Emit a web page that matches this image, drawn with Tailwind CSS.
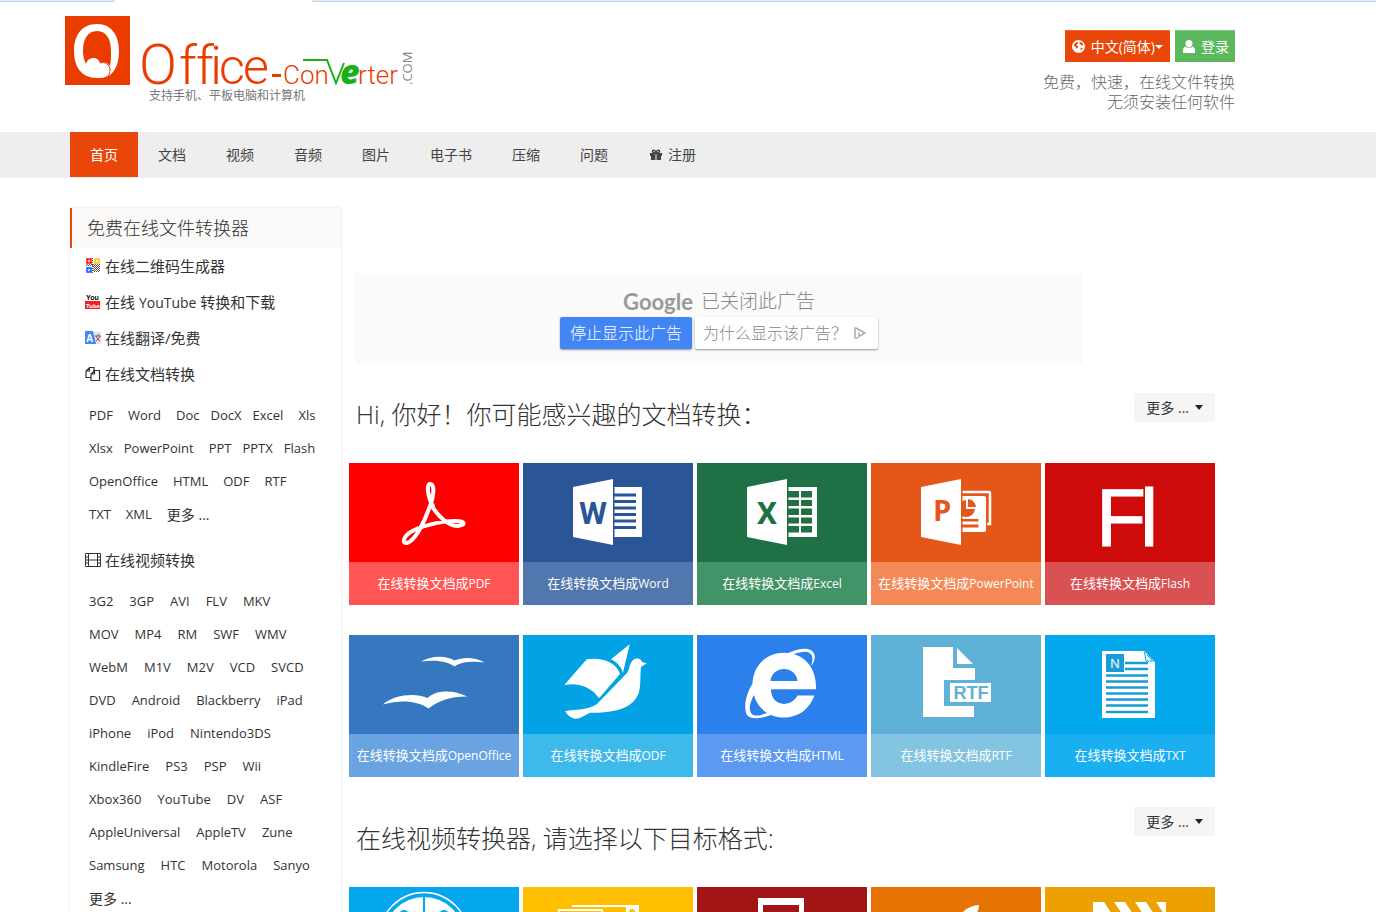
<!DOCTYPE html>
<html lang="zh-CN">
<head>
<meta charset="utf-8">
<title>Office-Converter</title>
<script src="https://cdn.jsdelivr.net/npm/@tailwindcss/browser@4"></script>
</head>
<body class="h-screen overflow-hidden bg-white font-['Open_Sans','Noto_Sans_CJK_SC',sans-serif] text-[#333]">

<div class="flex h-[2px]">
  <div class="w-[115px] rounded-br border-b border-[#b9cfe6] bg-[#e3edf7]"></div>
  <div class="ml-[197px] flex-1 rounded-bl border-b border-[#b9cfe6] bg-[#e3edf7]"></div>
</div>

<header class="h-[130px] pl-[65px]">
  <div class="flex max-w-[1170px] justify-between">
    <a href="#" class="block pt-[14px]" aria-label="Office-Converter.com">
      <svg class="overflow-visible" width="350" height="70" viewBox="0 0 350 70">
        <rect width="65" height="69" fill="#eb3c00"/>
        <path fill="#fff" fill-rule="evenodd" d="M32 8C47 8 54 20 54 35C54 46 51 54 45 59C41 62 37 62 32 62C16 62 9 50 9 35C9 19 17 8 32 8ZM32 15C22 15 18 24 18 35C18 40 19 44 21 48C22 44 25 42 29 42C32 42 34 44 35 47C39 45 43 47 45 50C46 46 46 41 46 35C46 24 42 15 32 15Z"/>
        <path fill="none" stroke="#eb3c00" stroke-width="1" d="M35 47C40 45 45 49 45 54C45 58 43 61 39 62"/>
        <g fill="#eb3c00" font-family="Roboto" font-weight="300">
          <text x="74" y="68" font-size="56">O</text>
          <text x="114 131 145" y="68" font-size="54">ffi</text>
          <text x="154 178" y="68" font-size="50">ce</text>
          <rect x="207" y="58" width="9" height="3"/>
          <text x="218" y="68" font-size="26">Con</text>
          <text x="293" y="68" font-size="26">rter</text>
        </g>
        <path fill="none" stroke="#18b218" stroke-width="2" d="M238 44H262L271 67L279 47"/>
        <text x="275" y="68" font-size="34" fill="#18b218" font-family="Open Sans" font-weight="800" font-style="italic">e</text>
        <text transform="translate(347 69) rotate(-90)" font-size="13" fill="#888" font-family="Open Sans">.COM</text>
      </svg>
      <span class="block pl-[84px] text-xs leading-5 text-[#777]">支持手机、平板电脑和计算机</span>
    </a>
    <div class="flex flex-col items-end pt-7">
      <div class="flex gap-[5px] text-sm text-white [text-shadow:1px_1px_1px_rgba(0,0,0,0.4)]">
        <button class="flex h-8 items-center border-t border-[#ec6a35] bg-[#e84709] px-[7px] whitespace-nowrap">
          <svg class="mr-[6px]" width="13" height="13" viewBox="0 0 12 12"><circle cx="6" cy="6" r="6" fill="#fff"/><path fill="#e84709" d="M2.500 3L5 1.500L5.500 3L4 4.500L6 6L4.500 8L3 6L1.500 5ZM7 1.500L9.500 2.500L10.500 5L8.500 4.500L7 3.500ZM8 7L10 7.500L8 10Z"/></svg>
          中文(简体)
          <svg width="8" height="4" viewBox="0 0 8 4"><path fill="#fff" d="M0 0H8L4 4Z"/></svg>
        </button>
        <button class="flex h-8 items-center border-t border-[#79c579] bg-[#5cb85c] pr-[6px] pl-2 whitespace-nowrap">
          <svg class="mr-[6px]" width="12" height="13" viewBox="0 0 12 13"><path fill="#fff" d="M6 0C8 0 9.500 1.500 9.500 3.500S8 7.500 6 7.500S2.500 5.500 2.500 3.500S4 0 6 0ZM0 13V10C0 8 1 7 2.500 6.500C4 8.500 8 8.500 9.500 6.500C11 7 12 8 12 10V13Z"/></svg>
          登录
        </button>
      </div>
      <p class="mt-[10px] text-right text-base leading-5 font-light text-[#666]">免费，快速，在线文件转换<br>无须安装任何软件</p>
    </div>
  </div>
</header>

<nav class="h-[46px] bg-[#eee] pl-[70px]">
  <div class="flex text-sm leading-[45px] text-[#444] [&>a]:px-5">
    <a href="#" class="bg-[#e84709] text-white">首页</a>
    <a href="#">文档</a>
    <a href="#">视频</a>
    <a href="#">音频</a>
    <a href="#">图片</a>
    <a href="#">电子书</a>
    <a href="#">压缩</a>
    <a href="#">问题</a>
    <a href="#" class="flex items-center gap-[6px]"><svg class="ml-[2px]" width="12" height="12" viewBox="0 0 12 12" fill="#444"><path d="M0 4H5V7H0ZM7 4H12V7H7ZM1 7H5V11H1ZM7 7H11V11H7Z"/><path d="M5 4H7V11H5Z" fill="#999"/><path fill="none" stroke="#444" stroke-width="1.400" d="M6 4C4 4 2.500 3.500 2.500 2.200C2.500 0.500 5 0.500 6 4C7 0.500 9.500 0.500 9.500 2.200C9.500 3.500 8 4 6 4Z"/></svg>注册</a>
  </div>
</nav>

<div class="flex max-w-[1235px] items-start pt-[30px] pr-5 pl-[70px]">
  <aside class="w-[271px] shrink-0 pb-4 shadow-[0_0_3px_rgba(0,0,0,0.12)]">
    <h2 class="h-10 border-l-2 border-[#e84709] bg-[#faf9f8] pl-[15px] text-lg leading-10 font-light">免费在线文件转换器</h2>
    <div class="text-[15px] [&>a]:flex [&>a]:h-9 [&>a]:items-center [&>a]:gap-1 [&>a]:pl-[15px] [&_svg]:shrink-0">
      <a href="#"><svg width="16" height="16" viewBox="0 0 16 16" fill="none"><path stroke="#f00" stroke-width="1.500" d="M2 1H6V5H2Z"/><path fill="#f00" d="M3.500 2.500H4.500V3.500H3.500Z"/><path stroke="#fb0" stroke-width="1.500" d="M10 1H14V5H10Z"/><path fill="#fb0" d="M11.500 2.500H12.500V3.500H11.500Z"/><path stroke="#05f" stroke-width="1.500" d="M2 10H6V14H2Z"/><path fill="#05f" d="M3.500 11.500H4.500V12.500H3.500Z"/><path stroke="#555" stroke-width="1" stroke-dasharray="1 1" d="M7.500 0V15M1 7.500H15M2 6.500H15M8 8.500H15M9 9.500H15M8 10.500H15M9 11.500H15M8 12.500H15M9 13.500H15"/></svg>在线二维码生成器</a>
      <a href="#"><svg width="16" height="16" viewBox="0 0 16 16"><rect y="7" width="15" height="8" fill="#e22"/><text x="1" y="6" font-size="7" font-weight="700" font-family="Liberation Sans" fill="#000">You</text><text x="1" y="14" font-size="6" font-weight="700" font-family="Liberation Sans" fill="#fff">Tube</text></svg><span>在线 <span class="text-sm">YouTube</span> 转换和下载</span></a>
      <a href="#"><svg width="16" height="14" viewBox="0 0 16 14"><rect x="8" y="1" width="8" height="12" fill="#e4e4e4"/><path fill="#4587f4" d="M0 0H8L11 13H0Z"/><text x="1" y="11" font-size="10" font-weight="700" font-family="Liberation Sans" fill="#fff">A</text><path fill="none" stroke="#855" stroke-width="1" d="M10 5H16M13 3V5M15 5C14 8 12 9 11 10M11 5C12 8 14 9 15 10"/></svg>在线翻译/免费</a>
      <a href="#"><svg width="16" height="16" viewBox="0 0 16 16" fill="none" stroke="#333" stroke-width="1.200"><path d="M6 11.500H1V5L4.500 1.500H9V5M1 5H4.500V1.500"/><path d="M6 14.500V8L9.500 4.500H14.500V14.500ZM6 8H9.500V4.500"/></svg>在线文档转换</a>
    </div>
    <div class="pt-[7px] pb-[11px] pl-[19px] text-[13px] leading-[33px] [&_a]:mr-[15px] [&>div]:flex">
      <div><a href="#">PDF</a><a href="#">Word</a><a href="#" class="mr-[11px]!">Doc</a><a href="#" class="mr-[11px]!">DocX</a><a href="#">Excel</a><a href="#">Xls</a></div>
      <div><a href="#" class="mr-[11px]!">Xlsx</a><a href="#">PowerPoint</a><a href="#" class="mr-[11px]!">PPT</a><a href="#" class="mr-[11px]!">PPTX</a><a href="#">Flash</a></div>
      <div><a href="#">OpenOffice</a><a href="#">HTML</a><a href="#">ODF</a><a href="#">RTF</a></div>
      <div><a href="#">TXT</a><a href="#">XML</a><a href="#" class="text-[14px]">更多 ...</a></div>
    </div>
    <a href="#" class="flex h-9 items-center gap-1 pl-[15px] text-[15px]"><svg width="16" height="14" viewBox="0 0 16 14" fill="none" stroke="#333"><path d="M0.500 0.500H15.500V13.500H0.500ZM3.500 0.500V13.500M12.500 0.500V13.500M3.500 7H12.500"/><path d="M0 4H3M0 7H3M0 10H3M13 4H16M13 7H16M13 10H16"/></svg>在线视频转换</a>
    <div class="pt-[7px] pl-[19px] text-[13px] leading-[33px] [&_a]:mr-4 [&>div]:flex">
      <div><a href="#">3G2</a><a href="#">3GP</a><a href="#">AVI</a><a href="#">FLV</a><a href="#">MKV</a></div>
      <div><a href="#">MOV</a><a href="#">MP4</a><a href="#">RM</a><a href="#">SWF</a><a href="#">WMV</a></div>
      <div><a href="#">WebM</a><a href="#">M1V</a><a href="#">M2V</a><a href="#">VCD</a><a href="#">SVCD</a></div>
      <div><a href="#">DVD</a><a href="#">Android</a><a href="#">Blackberry</a><a href="#">iPad</a></div>
      <div><a href="#">iPhone</a><a href="#">iPod</a><a href="#">Nintendo3DS</a></div>
      <div><a href="#">KindleFire</a><a href="#">PS3</a><a href="#">PSP</a><a href="#">Wii</a></div>
      <div><a href="#">Xbox360</a><a href="#">YouTube</a><a href="#">DV</a><a href="#">ASF</a></div>
      <div><a href="#">AppleUniversal</a><a href="#">AppleTV</a><a href="#">Zune</a></div>
      <div><a href="#">Samsung</a><a href="#">HTC</a><a href="#">Motorola</a><a href="#">Sanyo</a></div>
      <div><a href="#" class="text-[14px]">更多 ...</a></div>
    </div>
  </aside>

  <main class="ml-2 min-w-0 flex-1 pt-[65px]">
    <div class="ml-[6px] flex h-[90px] max-w-[728px] flex-col items-center bg-[#fafafa] pt-3">
      <div class="flex h-8 items-center gap-2 text-[19px] font-light text-[#888]">
        <span class="font-['Lato'] text-[22px] font-bold text-[#999]">Google</span><span>已关闭此广告</span>
      </div>
      <div class="flex gap-[3px] text-base font-light">
        <button class="h-8 rounded-xs bg-[#4285f4] px-[10px] text-white shadow-[0_1px_2px_rgba(0,0,0,0.4)]">停止显示此广告</button>
        <button class="flex h-8 items-center rounded-xs bg-white pr-3 pl-2 text-[#888] shadow-[0_1px_2px_rgba(0,0,0,0.4)]">为什么显示该广告？<svg class="ml-[7px]" width="12" height="12" viewBox="0 0 12 12" fill="none" stroke="#aaa" stroke-width="1.500"><path d="M4 11H1V1H2L11 6L5 9.500V5.500M5 3V4"/></svg></button>
      </div>
    </div>

    <section class="mt-[30px]">
      <div class="flex h-[70px] items-start justify-between pl-[7px]">
        <h2 class="text-[25px] leading-[42px] font-light">Hi, 你好！你可能感兴趣的文档转换：</h2>
        <button class="flex h-[29px] items-center bg-[#f5f5f5] px-3 text-sm">更多 ...<svg class="ml-[6px]" width="8" height="5" viewBox="0 0 8 5"><path fill="#222" d="M0 0H8L4 5Z"/></svg></button>
      </div>
      <div class="grid grid-cols-5 gap-x-1 gap-y-[30px] text-center text-[13px] leading-[43px] whitespace-nowrap text-white [&_b]:text-xs [&_b]:font-medium [&_svg]:mx-auto [&_svg]:block">
        <a href="#" class="bg-[#f00]"><svg width="170" height="99" viewBox="0 0 170 99" fill="none" stroke="#fff" stroke-width="4" stroke-linecap="round" stroke-linejoin="round"><path d="M84 43C79 35 77 21 81 21C86 21 85 33 81 43C76 57 67 77 58 80C53 81 54 75 60 70C71 63 92 58 106 58C117 58 117 62 109 63C97 63 88 51 82 42"/></svg><span class="block bg-[#ff5555]">在线转换文档成<b>PDF</b></span></a>
        <a href="#" class="bg-[#2a5697]"><svg width="170" height="99" viewBox="0 0 170 99"><path fill="#fff" d="M50 24L90 16V82L50 74ZM91.500 24H119V74H91.500Z"/><path stroke="#2a5697" stroke-width="3" d="M91 32H113M91 38.500H113M91 45H113M91 51.500H113M91 58H113M91 64.500H113"/><text x="70" y="61" text-anchor="middle" font-size="32" font-weight="700" font-family="Roboto" fill="#2a5697">W</text></svg><span class="block bg-[#5276ae]">在线转换文档成<b>Word</b></span></a>
        <a href="#" class="bg-[#1f7145]"><svg width="170" height="99" viewBox="0 0 170 99"><path fill="#fff" d="M50 24L90 16V82L50 74ZM91.500 24H120V74H91.500Z"/><path fill="#1f7145" d="M91 28H102V34.500H91ZM104 28H115V34.500H104ZM91 37H102V43H91ZM104 37H115V43H104ZM91 45.500H102V52H91ZM104 45.500H115V52H104ZM91 54.500H102V60.500H91ZM104 54.500H115V60.500H104ZM91 63H102V69.500H91ZM104 63H115V69.500H104Z"/><text x="70" y="61" text-anchor="middle" font-size="32" font-weight="700" font-family="Roboto" fill="#1f7145">X</text></svg><span class="block bg-[#429368]">在线转换文档成<b>Excel</b></span></a>
        <a href="#" class="bg-[#e55619]"><svg width="170" height="99" viewBox="0 0 170 99"><path fill="#fff" d="M50 24L90 16V82L50 74ZM91.500 33H113Q115 33 115 35V67Q115 69 113 69H91.500Z"/><path fill="none" stroke="#fff" stroke-width="2.500" d="M91.500 29H118Q119 29 119 31V61H116"/><path fill="#e55619" d="M95 37V46H104A9 9 0 0 1 91 53V38ZM97 36A9 9 0 0 1 105 44H97ZM91 56H107.500V58.500H91ZM91 61.500H107.500V64.500H91Z"/><text x="71" y="58" text-anchor="middle" font-size="29" font-weight="700" font-family="Open Sans" fill="#e55619">P</text></svg><span class="block bg-[#f38957]">在线转换文档成<b>PowerPoint</b></span></a>
        <a href="#" class="bg-[#ce0a0b]"><svg width="170" height="99" viewBox="0 0 170 99"><text x="51 95" y="83" font-size="82" font-family="Liberation Sans" fill="#fff" stroke="#fff">Fl</text></svg><span class="block bg-[#d95152]">在线转换文档成<b>Flash</b></span></a>

        <a href="#" class="bg-[#3578c0]"><svg width="170" height="99" viewBox="0 0 170 99" fill="#fff"><path d="M72 26.500C82 21 96 20 105.500 25.500C114 22 126 22 135.500 27.500C123 26 112 27 105.500 31.500C97 26 86 25 72 26.500ZM34 69.500C46 59 67 58 78.500 63C88 54 105 55 118.500 61.500C104 61 90 65 79.500 73.500C67 65 51 65 34 69.500Z"/></svg><span class="block bg-[#69a3e1]">在线转换文档成<b>OpenOffice</b></span></a>
        <a href="#" class="bg-[#02a3e4]"><svg width="170" height="99" viewBox="0 0 170 99" fill="#fff"><path d="M106.700 9.300L88 24.300Q97 28 100 37.700ZM63.700 24.300C77 22 93 26 97 39L76 63.300C69 52 55 47 41.300 50ZM123.700 28.300L118 32C117 40 118 50 116 57C111 72 96 78 67 77.700C62 80 57 84 52 83.700C48 83 44 80 42 76.300C50 74 64 76 74 69L104 38C107 34 106 29 110 25C114 22 118 24 119 27Z"/></svg><span class="block bg-[#3db9ea]">在线转换文档成<b>ODF</b></span></a>
        <a href="#" class="bg-[#2c80ec]"><svg width="170" height="99" viewBox="0 0 170 99" fill="#fff"><path fill-rule="evenodd" d="M119 54.300H74C74 72 94 73 100.500 60.500H117.500C112 75 101 82.500 87 82.500C68 82.500 55.500 68 55.500 50C55.500 31 69 17.700 87 17.700C108 17.700 120 34 119 54.300ZM73.500 46H100.500C99 30 75 30 73.500 46Z"/><path d="M91 18C103 13 112 12 116 17C119 21 118 26 114 31C117 22 115 18 110 17C104 16 98 19 94 20ZM56 48C49 58 46 73 50 80C54 85 65 84 76 79L74 76C66 80 57 83 54 78C51 73 54 65 58 58Z"/></svg><span class="block bg-[#5b9af0]">在线转换文档成<b>HTML</b></span></a>
        <a href="#" class="bg-[#5fb1d8]"><svg width="170" height="99" viewBox="0 0 170 99"><path fill="#fff" d="M52 12H82V33H104V45H73V71H103V82H52ZM86 13L102 29H86ZM79 48H120V67H79Z"/><text x="100" y="64" text-anchor="middle" font-size="18" font-weight="700" font-family="Liberation Sans" fill="#5fb1d8">RTF</text></svg><span class="block bg-[#83c4e2]">在线转换文档成<b>RTF</b></span></a>
        <a href="#" class="bg-[#03a7ec]"><svg width="170" height="99" viewBox="0 0 170 99"><path fill="#fff" d="M57 16H99L110 27V83H57Z"/><path fill="none" stroke="#03a7ec" stroke-width="1" d="M99.500 17L101 26H109M102 20L107 25"/><path fill="#1a9bd7" d="M61 19H79V37H61Z"/><path stroke="#1a9bd7" stroke-width="2.500" d="M80 28H103M80 34H103M61 40.500H103M61 46.500H103M61 52.500H103M61 58.500H103M61 64.500H103M61 70.500H103M61 77H103"/><text x="70" y="33" text-anchor="middle" font-size="13" font-family="Liberation Sans" fill="#fff">N</text></svg><span class="block bg-[#1aaff0]">在线转换文档成<b>TXT</b></span></a>
      </div>
    </section>

    <section class="mt-[30px]">
      <div class="flex h-20 items-start justify-between pl-[7px]">
        <h2 class="text-[25px] leading-[62px] font-light">在线视频转换器, 请选择以下目标格式:</h2>
        <button class="flex h-[29px] items-center bg-[#f5f5f5] px-3 text-sm">更多 ...<svg class="ml-[6px]" width="8" height="5" viewBox="0 0 8 5"><path fill="#222" d="M0 0H8L4 5Z"/></svg></button>
      </div>
      <div class="grid grid-cols-5 gap-x-1 [&_svg]:mx-auto [&_svg]:block">
        <a href="#" class="bg-[#03a7ec]"><svg width="170" height="142" viewBox="0 0 170 142"><circle cx="75" cy="50" r="44.500" fill="none" stroke="#fff" stroke-width="1.500"/><circle cx="75" cy="50" r="40" fill="#fff"/><path stroke="#03a7ec" stroke-width="2" d="M75 8V60"/><circle cx="55" cy="28" r="5" fill="#03a7ec"/><circle cx="95" cy="28" r="5" fill="#03a7ec"/></svg></a>
        <a href="#" class="bg-[#ffbf00]"><svg width="170" height="142" viewBox="0 0 170 142"><path fill="#fff" d="M49 18H116V60H103V20H49Z"/><path fill="none" stroke="#fff" stroke-width="2" d="M36 60V23H79V60"/><circle cx="109" cy="25" r="3" fill="#ffbf00"/></svg></a>
        <a href="#" class="bg-[#a21516]"><svg width="170" height="142" viewBox="0 0 170 142"><path fill="#fff" fill-rule="evenodd" d="M61 11H107V90H61ZM66 18V80H102V18Z"/></svg></a>
        <a href="#" class="bg-[#e57404]"><svg width="170" height="142" viewBox="0 0 170 142"><path fill="#fff" d="M108 18C97 19 89 25 88 34C100 33 108 27 108 18Z"/></svg></a>
        <a href="#" class="bg-[#eca100]"><svg width="170" height="142" viewBox="0 0 170 142"><path fill="#fff" d="M48 15H59L69 30H48ZM69 15H80L90 30H79ZM90 15H101L111 30H100ZM111 15H121V30Z"/></svg></a>
      </div>
    </section>
  </main>
</div>
</body>
</html>
